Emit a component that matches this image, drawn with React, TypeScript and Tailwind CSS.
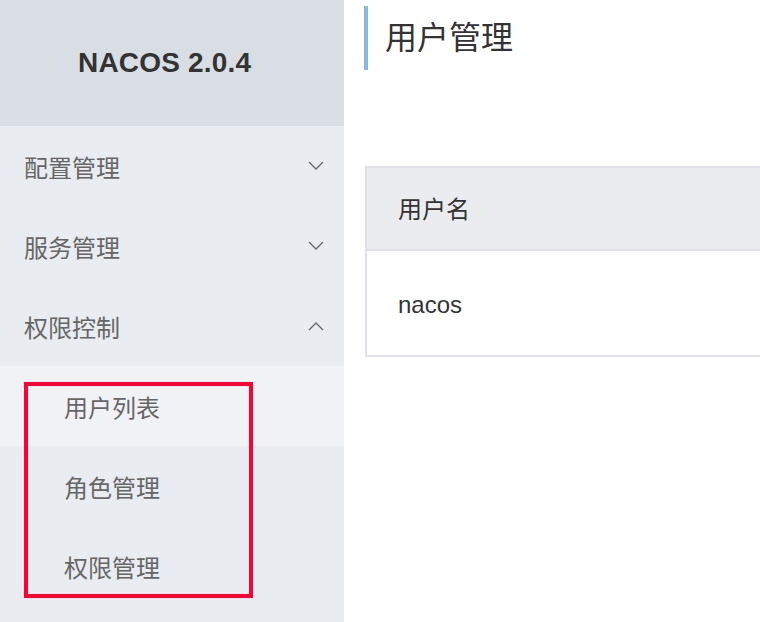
import React from 'react';

const cjk = '"Liberation Sans", "Noto Sans CJK SC", sans-serif';

function Chevron({ up }: { up?: boolean }) {
  return (
    <svg width="16" height="10" viewBox="0 0 16 10" className="text-[#666]">
      <path
        d={up ? 'M1 9 L8 2 L15 9' : 'M1 1 L8 8 L15 1'}
        fill="none"
        stroke="currentColor"
        strokeWidth="1.3"
      />
    </svg>
  );
}

function MenuItem({ label, up }: { label: string; up?: boolean }) {
  return (
    <div className="h-[80px] flex items-center justify-between pl-[24px] pr-[20px] text-[24px] text-[#666]">
      <span className="pt-[6px]">{label}</span>
      <Chevron up={up} />
    </div>
  );
}

function SubItem({ label, active }: { label: string; active?: boolean }) {
  return (
    <div
      className={
        'h-[80px] flex items-center pl-[64px] pt-[6px] text-[24px] text-[#666] ' +
        (active ? 'bg-[#f1f2f6]' : '')
      }
    >
      {label}
    </div>
  );
}

export default function App() {
  return (
    <div className="flex h-[622px] w-[760px] overflow-hidden bg-white" style={{ fontFamily: cjk }}>
      <aside className="w-[344px] shrink-0 bg-[#e9ecf0] flex flex-col">
        <div className="h-[126px] bg-[#d9dee4] flex items-center pl-[78px]">
          <span className="text-[28px] font-bold text-[#333] tracking-[0.2px]">NACOS 2.0.4</span>
        </div>
        <MenuItem label="配置管理" />
        <MenuItem label="服务管理" />
        <MenuItem label="权限控制" up />
        <div className="relative">
          <SubItem label="用户列表" active />
          <SubItem label="角色管理" />
          <SubItem label="权限管理" />
          <div className="absolute left-[24px] top-[16px] w-[229px] h-[216px] border-4 border-[#ff0033]" />
        </div>
      </aside>

      <main className="flex-1 pl-[20px] pt-[6px]">
        <div className="h-[64px] border-l-4 border-[#88b7e0] pl-[17px] flex items-center">
          <h1 className="text-[32px] text-[#333] leading-none">用户管理</h1>
        </div>

        <div className="mt-[96px] ml-px w-[600px] border-2 border-[#e0e2e7]">
          <div className="h-[83px] bg-[#ebecf0] border-b-2 border-[#e0e2e7] flex items-center pl-[31px] pt-[3px] text-[24px] text-[#333]">
            用户名
          </div>
          <div className="h-[104px] flex items-center pl-[31px] pt-[3px] text-[24px] text-[#333]">
            nacos
          </div>
        </div>
      </main>
    </div>
  );
}
